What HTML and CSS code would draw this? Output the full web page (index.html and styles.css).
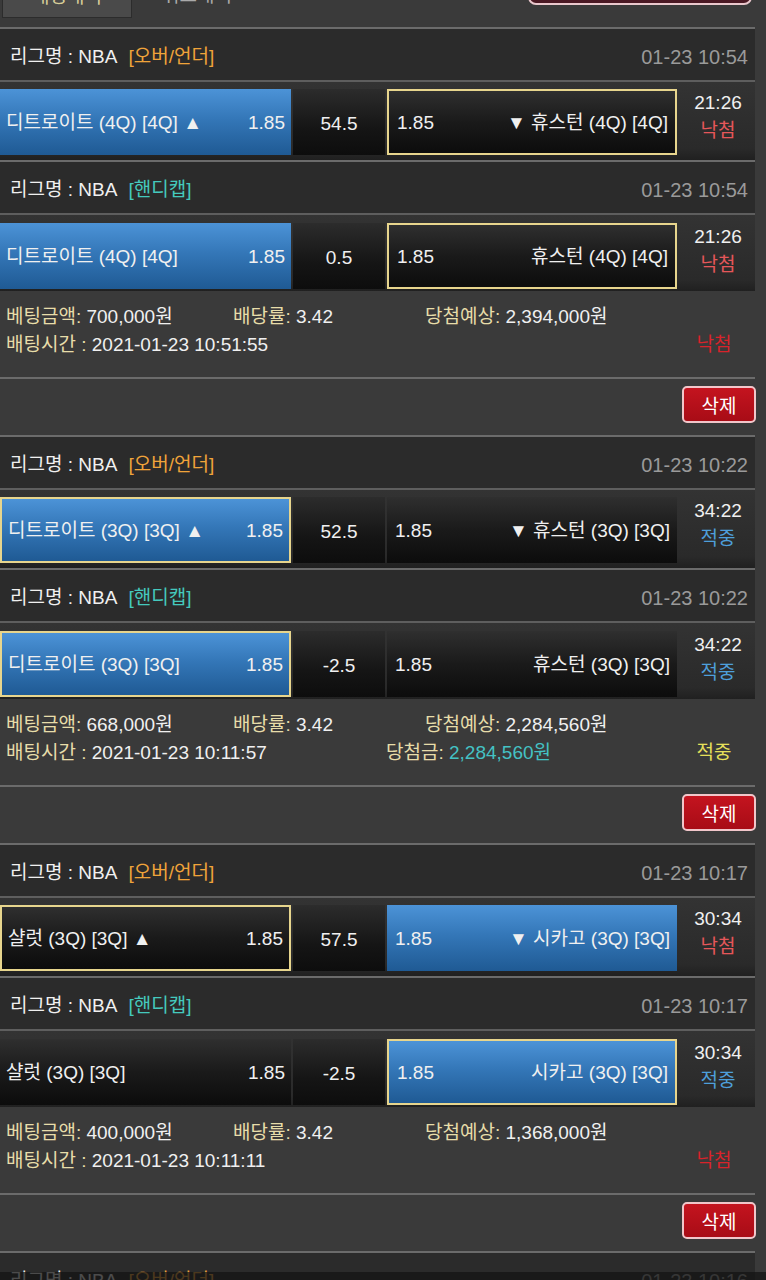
FILE: index.html
```html
<!DOCTYPE html>
<html lang="ko">

<head>
    <meta charset="UTF-8">
    <meta name="viewport" content="width=device-width, initial-scale=1.0">
    <title>베팅내역</title>
    <link rel="stylesheet" href="styles.css">
</head>

<body>
    <div class="tabs">
        <div class="tab on">배팅내역</div>
        <div class="tab">취소내역</div>
        <div class="tab-btn">전체삭제</div>
    </div>

    <div class="block">
        <div class="league"><span>리그명 : NBA <em class="ou">[오버/언더]</em></span><span class="date">01-23 10:54</span></div>
        <div class="game">
            <div class="pick blue"><span>디트로이트 (4Q) [4Q] ▲</span><span>1.85</span></div>
            <div class="line">54.5</div>
            <div class="pick dark sel"><span>1.85</span><span>▼ 휴스턴 (4Q) [4Q]</span></div>
            <div class="state"><span>21:26</span><span class="lose">낙첨</span></div>
        </div>
        <div class="league"><span>리그명 : NBA <em class="hc">[핸디캡]</em></span><span class="date">01-23 10:54</span></div>
        <div class="game">
            <div class="pick blue"><span>디트로이트 (4Q) [4Q]</span><span>1.85</span></div>
            <div class="line">0.5</div>
            <div class="pick dark sel"><span>1.85</span><span>휴스턴 (4Q) [4Q]</span></div>
            <div class="state"><span>21:26</span><span class="lose">낙첨</span></div>
        </div>
        <div class="info">
            <div class="row">
                <span class="c1"><b>베팅금액:</b> 700,000원</span>
                <span class="c2"><b>배당률:</b> 3.42</span>
                <span><b>당첨예상:</b> 2,394,000원</span>
            </div>
            <div class="row">
                <span class="c-wide"><b>배팅시간 :</b> 2021-01-23 10:51:55</span>
                <span class="c-win"></span>
                <span class="result lose-txt">낙첨</span>
            </div>
        </div>
        <div class="actions"><button class="del">삭제</button></div>
    </div>

    <div class="block">
        <div class="league"><span>리그명 : NBA <em class="ou">[오버/언더]</em></span><span class="date">01-23 10:22</span></div>
        <div class="game">
            <div class="pick blue sel"><span>디트로이트 (3Q) [3Q] ▲</span><span>1.85</span></div>
            <div class="line">52.5</div>
            <div class="pick dark"><span>1.85</span><span>▼ 휴스턴 (3Q) [3Q]</span></div>
            <div class="state"><span>34:22</span><span class="win">적중</span></div>
        </div>
        <div class="league"><span>리그명 : NBA <em class="hc">[핸디캡]</em></span><span class="date">01-23 10:22</span></div>
        <div class="game">
            <div class="pick blue sel"><span>디트로이트 (3Q) [3Q]</span><span>1.85</span></div>
            <div class="line">-2.5</div>
            <div class="pick dark"><span>1.85</span><span>휴스턴 (3Q) [3Q]</span></div>
            <div class="state"><span>34:22</span><span class="win">적중</span></div>
        </div>
        <div class="info">
            <div class="row">
                <span class="c1"><b>베팅금액:</b> 668,000원</span>
                <span class="c2"><b>배당률:</b> 3.42</span>
                <span><b>당첨예상:</b> 2,284,560원</span>
            </div>
            <div class="row">
                <span class="c-wide"><b>배팅시간 :</b> 2021-01-23 10:11:57</span>
                <span class="c-win"><b>당첨금:</b> <i>2,284,560원</i></span>
                <span class="result win-txt">적중</span>
            </div>
        </div>
        <div class="actions"><button class="del">삭제</button></div>
    </div>

    <div class="block">
        <div class="league"><span>리그명 : NBA <em class="ou">[오버/언더]</em></span><span class="date">01-23 10:17</span></div>
        <div class="game">
            <div class="pick dark sel"><span>샬럿 (3Q) [3Q] ▲</span><span>1.85</span></div>
            <div class="line">57.5</div>
            <div class="pick blue"><span>1.85</span><span>▼ 시카고 (3Q) [3Q]</span></div>
            <div class="state"><span>30:34</span><span class="lose">낙첨</span></div>
        </div>
        <div class="league"><span>리그명 : NBA <em class="hc">[핸디캡]</em></span><span class="date">01-23 10:17</span></div>
        <div class="game">
            <div class="pick dark"><span>샬럿 (3Q) [3Q]</span><span>1.85</span></div>
            <div class="line">-2.5</div>
            <div class="pick blue sel"><span>1.85</span><span>시카고 (3Q) [3Q]</span></div>
            <div class="state"><span>30:34</span><span class="win">적중</span></div>
        </div>
        <div class="info">
            <div class="row">
                <span class="c1"><b>베팅금액:</b> 400,000원</span>
                <span class="c2"><b>배당률:</b> 3.42</span>
                <span><b>당첨예상:</b> 1,368,000원</span>
            </div>
            <div class="row">
                <span class="c-wide"><b>배팅시간 :</b> 2021-01-23 10:11:11</span>
                <span class="c-win"></span>
                <span class="result lose-txt">낙첨</span>
            </div>
        </div>
        <div class="actions"><button class="del">삭제</button></div>
    </div>

    <div class="block">
        <div class="league"><span>리그명 : NBA <em class="ou">[오버/언더]</em></span><span class="date">01-23 10:16</span></div>
    </div>

    <div class="shade"></div>
</body>

</html>
```

FILE: styles.css
```css
body {
    margin: 0;
    background-color: #3a3a3a;
    color: #f0f0f0;
    font-family: "Liberation Sans", "Noto Sans CJK KR", sans-serif;
    font-size: 19px;
    line-height: 28px;
    overflow: hidden;
}

/* top tabs, mostly scrolled off */
.tabs {
    height: 27px;
    overflow: hidden;
    display: flex;
    align-items: flex-start;
}

.tab {
    margin-top: -22px;
    height: 40px;
    width: 130px;
    line-height: 36px;
    text-align: center;
    color: #aaaaaa;
    box-sizing: border-box;
}

.tab.on {
    margin-left: 2px;
    background-color: #4a4a4a;
    border: 1px solid #2c2c2c;
    color: #d9cf9a;
}

.tab-btn {
    margin: -24px 14px 0 auto;
    width: 224px;
    height: 29px;
    box-sizing: border-box;
    border: 2px solid #e9c7cc;
    border-radius: 8px;
    background-color: #4a1823;
    color: #fff;
    text-align: center;
}

.block {
    width: 100%;
}

.league {
    width: 755px;
    height: 53px;
    box-sizing: border-box;
    border-top: 2px solid #6b6b6b;
    background-color: #2b2b2b;
    display: flex;
    justify-content: space-between;
    align-items: center;
    padding: 5px 7px 0 10px;
    margin-right: 11px;
}

.league em {
    font-style: normal;
    margin-left: 7px;
}

.ou {
    color: #f0a43a;
}

.hc {
    color: #45c9bd;
}

.date {
    color: #9a9a9a;
    font-size: 20px;
}

.game {
    width: 755px;
    border-top: 2px solid #5e5e5e;
    background: linear-gradient(#333333, #2a2a2a 85%, #202020);
    display: grid;
    grid-template-columns: 291px 92px 290px 75px;
    column-gap: 2px;
    padding: 7px 0 5px;
}

.block .game:nth-of-type(4) {
    padding: 8px 0 2px;
}

.pick {
    height: 66px;
    box-sizing: border-box;
    display: flex;
    justify-content: space-between;
    align-items: center;
    padding: 2px 6px 0 6px;
    white-space: nowrap;
}

.pick.blue {
    background: linear-gradient(#4c93d7, #3477b8 45%, #1f5a94);
}

.pick.dark {
    background: linear-gradient(#2f2f2f, #1a1a1a 50%, #0c0c0c);
}

.pick.sel {
    border: 2px solid #e7d58d;
}

.game .pick:nth-child(3) {
    padding: 2px 7px 0 8px;
}

.line {
    height: 66px;
    display: flex;
    align-items: center;
    justify-content: center;
    padding-top: 4px;
    box-sizing: border-box;
    background: linear-gradient(#2c2c2c, #151515 60%, #0d0d0d);
}

.state {
    display: flex;
    flex-direction: column;
    align-items: center;
    padding-left: 3px;
}

.lose {
    color: #e5575a;
}

.win {
    color: #4e9fdb;
}

.info {
    padding: 12px 0 18px 6px;
    height: 86px;
    box-sizing: border-box;
}

.info b {
    font-weight: normal;
    color: #e7dda9;
}

.row {
    display: flex;
    white-space: nowrap;
}

.c1 {
    width: 227px;
}

.c2 {
    width: 192px;
}

.c-wide {
    width: 380px;
}

.c-win {
    width: 309px;
}

.c-win i {
    font-style: normal;
    color: #44c2c4;
}

.result {
    width: 38px;
    text-align: center;
}

.lose-txt {
    color: #d8232a;
}

.win-txt {
    color: #e6e05a;
}

.actions {
    height: 58px;
    box-sizing: border-box;
    padding: 9px 10px 0 0;
    background: linear-gradient(#6b6b6b, #6b6b6b) no-repeat 0 0 / 755px 2px;
    display: flex;
    justify-content: flex-end;
}

.del {
    width: 74px;
    height: 37px;
    border: 2px solid #f1c6ca;
    border-radius: 5px;
    background: linear-gradient(#c4141f, #a80c16);
    color: #fff;
    font-family: inherit;
    font-size: 19px;
    padding: 0;
}

.shade {
    position: fixed;
    left: 0;
    right: 0;
    bottom: 0;
    height: 8px;
    background-color: rgba(20, 20, 20, 0.75);
}
```
